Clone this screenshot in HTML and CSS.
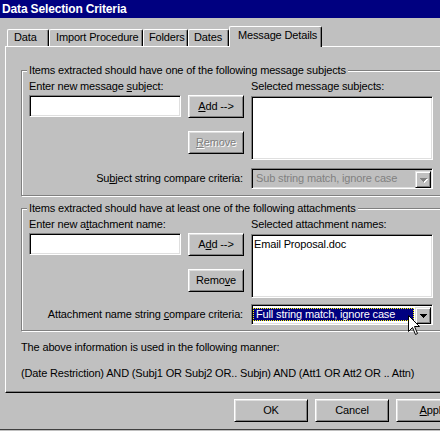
FILE: index.html
```html
<!DOCTYPE html>
<html>
<head>
<meta charset="utf-8">
<link rel="stylesheet" href="styles.css">
</head>
<body>
<div class="window">
  <div class="titlebar">Data Selection Criteria</div>
  <div class="tabstrip">
    <div class="tab t-data">Data</div>
    <div class="tab t-import">Import Procedure</div>
    <div class="tab t-folders">Folders</div>
    <div class="tab t-dates">Dates</div>
    <div class="tab t-msg active">Message Details</div>
  </div>
  <div class="panel">
    <fieldset class="group g1">
      <legend>Items extracted should have one of the following message subjects</legend>
      <div class="cols">
        <div class="col-entry">
          <div class="lbl">Enter new message <u>s</u>ubject:</div>
          <div class="edit sunken"></div>
        </div>
        <div class="col-btns">
          <div class="btn"><span><u>A</u>dd --&gt;</span></div>
          <div class="btn disabled"><span><u>R</u>emove</span></div>
        </div>
        <div class="col-list">
          <div class="lbl">Selected message subjects:</div>
          <div class="list sunken"></div>
        </div>
      </div>
      <div class="crit">
        <div class="crit-lbl">Su<u>b</u>ject string compare criteria:</div>
        <div class="combo sunken disabled">
          <div class="combo-text">Sub string match, ignore case</div>
          <div class="drop"><svg width="7" height="4" viewBox="0 0 7 4" shape-rendering="crispEdges"><path d="M0 0h7v1h-1v1h-1v1h-1v1h-1v-1h-1v-1h-1v-1h-1z" /></svg></div>
        </div>
      </div>
    </fieldset>
    <fieldset class="group g2">
      <legend>Items extracted should have at least one of the following attachments</legend>
      <div class="cols">
        <div class="col-entry">
          <div class="lbl">Enter new a<u>t</u>tachment name:</div>
          <div class="edit sunken"></div>
        </div>
        <div class="col-btns">
          <div class="btn"><span>A<u>d</u>d --&gt;</span></div>
          <div class="btn"><span>Remo<u>v</u>e</span></div>
        </div>
        <div class="col-list">
          <div class="lbl">Selected attachment names:</div>
          <div class="list sunken"><div class="item">Email Proposal.doc</div></div>
        </div>
      </div>
      <div class="crit">
        <div class="crit-lbl">Attachment name string <u>c</u>ompare criteria:</div>
        <div class="combo sunken">
          <div class="combo-text selected">Full string match, ignore case</div>
          <div class="drop"><svg width="7" height="4" viewBox="0 0 7 4" shape-rendering="crispEdges"><path d="M0 0h7v1h-1v1h-1v1h-1v1h-1v-1h-1v-1h-1v-1h-1z" /></svg></div>
        </div>
      </div>
    </fieldset>
    <p class="note n1">The above information is used in the following manner:</p>
    <p class="note n2">(Date Restriction) AND (Subj1 OR Subj2 OR.. Subjn) AND (Att1 OR Att2 OR .. Attn)</p>
  </div>
  <div class="buttons">
    <div class="btn dlg">OK</div>
    <div class="btn dlg">Cancel</div>
    <div class="btn dlg"><span><u>A</u>pply</span></div>
  </div>
  <svg class="cursor" width="13" height="21" viewBox="0 0 13 21"><path d="M0.5 0.5 L0.5 16.5 L4.5 12.5 L7.5 19.5 L9.5 18.5 L6.5 11.5 L11.5 11.5 Z" fill="#fff" stroke="#000" stroke-width="1" stroke-linejoin="miter"/></svg>
</div>
</body>
</html>
```
FILE: styles.css
```css
* { box-sizing: border-box; }
html, body {
  margin: 0;
  padding: 0;
  width: 440px;
  height: 431px;
  overflow: hidden;
  background: #c0c0c0;
}
body {
  font-family: "Liberation Sans", Arial, sans-serif;
  font-size: 11px;
  letter-spacing: -0.15px;
  color: #000;
}
u { text-decoration: underline; text-underline-offset: 1px; }

.window {
  position: relative;
  height: 430px;
  width: 480px;
  border-bottom: 1px solid #404040;
}
.titlebar {
  height: 18px;
  background: #000080;
  color: #fff;
  font-weight: bold;
  font-size: 12px;
  line-height: 18px;
  padding-left: 2px;
  white-space: nowrap;
}

.tabstrip {
  display: flex;
  align-items: flex-end;
  height: 28px;
  padding-left: 7px;
}
.tab {
  height: 17px;
  border-top: 1px solid #fff;
  border-left: 1px solid #fff;
  border-right: 1px solid #000;
  border-radius: 2px 2px 0 0;
  box-shadow: inset -1px 0 #808080;
  padding: 1px 0 0 6px;
  line-height: 13px;
  white-space: nowrap;
}
.t-data { width: 42px; }
.t-import { width: 94px; }
.t-folders { width: 45px; padding-left: 5px; }
.t-dates { width: 41px; padding-left: 5px; }
.tab.active {
  width: 93px;
  height: 21px;
  padding: 2px 0 0 8px;
  margin-bottom: -1px;
  position: relative;
  z-index: 1;
  background: #c0c0c0;
}

.panel {
  margin-left: 5px;
  width: 470px;
  height: 347px;
  border-top: 1px solid #fff;
  border-left: 1px solid #fff;
  border-bottom: 1px solid #000;
  box-shadow: inset 0 -1px #808080;
  padding-left: 15px;
}

.group {
  margin: 0;
  width: 440px;
  border: 1px solid #808080;
  box-shadow: inset 1px 1px #fff, 1px 1px #fff;
  padding: 3px 0 0 7px;
}
.group legend {
  padding: 0 2px;
  margin-left: -2px;
  line-height: 13px;
  background: #c0c0c0;
  white-space: nowrap;
}
.g1 { margin-top: 17px; padding-bottom: 6px; }
.g2 { margin-top: 6px; padding-bottom: 5px; }

.cols {
  display: flex;
  gap: 7px;
  align-items: flex-start;
}
.lbl { line-height: 13px; white-space: nowrap; }
.col-entry { width: 152px; }
.col-entry .edit { margin-top: 2px; height: 22px; }
.col-btns {
  width: 56px;
  padding-top: 15px;
  display: flex;
  flex-direction: column;
  gap: 13px;
}
.col-list { width: 182px; }
.col-list .list { margin-top: 3px; height: 64px; }
.item { padding: 3px 0 0 2px; line-height: 13px; }

.crit {
  display: flex;
  width: 404px;
  align-items: center;
}
.g1 .crit { margin-top: 8px; }
.g2 .crit { margin-top: 6px; }
.crit-lbl {
  flex: 1;
  text-align: right;
  padding-right: 8px;
  white-space: nowrap;
  line-height: 13px;
}

.sunken {
  border: 1px solid;
  border-color: #808080 #fff #fff #808080;
  box-shadow: inset 1px 1px #000, inset -1px -1px #dfdfdf;
  background: #fff;
}
.btn {
  height: 23px;
  border: 1px solid;
  border-color: #fff #000 #000 #fff;
  box-shadow: inset 1px 1px #dfdfdf, inset -1px -1px #808080;
  display: flex;
  align-items: center;
  justify-content: center;
  white-space: nowrap;
  line-height: 13px;
}
.btn.disabled { color: #808080; text-shadow: 1px 1px 0 #fff; }

.combo {
  width: 182px;
  height: 21px;
  display: flex;
  padding: 2px 1px 2px 1px;
}
.combo.disabled { background: #c0c0c0; }
.combo-text {
  flex: 1;
  margin: 1px 1px 1px 0;
  padding-left: 3px;
  line-height: 13px;
  white-space: nowrap;
  overflow: hidden;
}
.combo.disabled .combo-text { color: #808080; }
.combo-text.selected {
  background: #000080;
  color: #fff;
  border: 1px dotted #ffff00;
  padding-left: 2px;
  line-height: 11px;
}
.drop {
  width: 16px;
  height: 17px;
  border: 1px solid;
  border-color: #dfdfdf #000 #000 #dfdfdf;
  box-shadow: inset 1px 1px #fff, inset -1px -1px #808080;
  background: #c0c0c0;
  display: flex;
  align-items: center;
  justify-content: center;
}
.drop svg { fill: #000; display: block; }
.combo.disabled .drop svg { fill: #808080; filter: drop-shadow(1px 1px 0 #fff); }

.note {
  margin: 0;
  line-height: 13px;
  white-space: nowrap;
}
.n1 { margin-top: 10px; }
.n2 { margin-top: 13px; }

.buttons {
  display: flex;
  gap: 7px;
  padding-left: 234px;
  margin-top: 6px;
}
.btn.dlg { width: 74px; }

.cursor {
  position: absolute;
  left: 408px;
  top: 315px;
  z-index: 5;
}
```
